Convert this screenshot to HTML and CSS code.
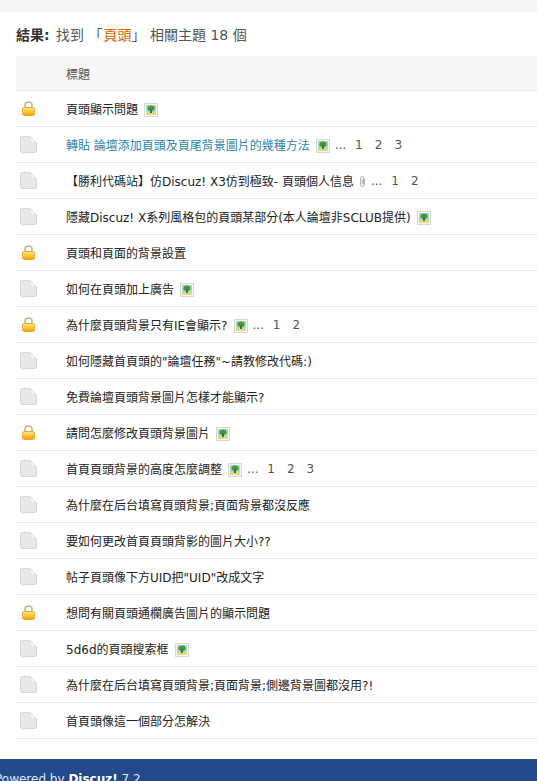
FILE: index.html
```html
<!DOCTYPE html>
<html lang="zh-Hant">
<head>
<meta charset="utf-8">
<title>搜尋結果</title>
<link rel="stylesheet" href="styles.css">
</head>
<body>
<svg class="defs" width="0" height="0" aria-hidden="true">
  <defs>
    <linearGradient id="lockbody" x1="0" y1="0" x2="0" y2="1"><stop offset="0" stop-color="#fde9a0"/><stop offset=".45" stop-color="#fbc83c"/><stop offset="1" stop-color="#f39c12"/></linearGradient>
  </defs>
  <symbol id="doc" viewBox="0 0 17 17"><path d="M1.500 .5H10L16.500 6.500V15a1.500 1.500 0 0 1-1.500 1.500H2A1.500 1.500 0 0 1 .5 15V2A1.500 1.500 0 0 1 1.500 .5Z" fill="#e8e8e8" stroke="#d8d8d8"/><path d="M10 .5V6.500H16.500Z" fill="#f6f6f6" stroke="#dedede"/></symbol>
  <symbol id="lock" viewBox="0 0 13 15"><path d="M3 7V4.200C3 2.300 4.500 1 6.500 1S10 2.300 10 4.200V7" fill="none" stroke="#c2b690" stroke-width="1.600"/><rect x=".5" y="6.500" width="12" height="8" rx="2" fill="url(#lockbody)" stroke="#eba820"/></symbol>
  <symbol id="pic" viewBox="0 0 14 14"><rect x=".5" y=".5" width="13" height="13" fill="#f7f7f0" stroke="#d6dacb"/><rect x="2" y="2" width="10" height="10" fill="#a6d3ec"/><rect x="2" y="9" width="10" height="3" fill="#dcdc80"/><ellipse cx="7" cy="5.200" rx="3.600" ry="2.600" fill="#4a9a2a"/><rect x="6" y="6" width="2" height="4" fill="#3a7a20"/></symbol>
  <symbol id="clip" viewBox="0 0 9 13"><path d="M6.500 3.500V9.500A2 2 0 0 1 2.500 9.500V3A1.500 1.500 0 0 1 5.500 3V9A.7.7 0 0 1 4.200 9V4" fill="none" stroke="#b4b4b4"/></symbol>
</svg>
<div class="topbar"></div>
<h1 class="result"><strong>結果:</strong> 找到 「<em>頁頭</em>」 相關主題 18 個</h1>
<div class="list">
  <div class="row head"><span class="cell-icon"></span><span>標題</span></div>
  <div class="row"><span class="cell-icon"><svg class="i-lock"><use href="#lock"/></svg></span><a>頁頭顯示問題</a><svg class="i-pic"><use href="#pic"/></svg></div>
  <div class="row"><span class="cell-icon"><svg class="i-doc"><use href="#doc"/></svg></span><a class="blue">轉貼 論壇添加頁頭及頁尾背景圖片的幾種方法</a><svg class="i-pic"><use href="#pic"/></svg><span class="pages">... <b>1</b><b>2</b><b>3</b></span></div>
  <div class="row"><span class="cell-icon"><svg class="i-doc"><use href="#doc"/></svg></span><a>【勝利代碼站】仿Discuz! X3仿到極致- 頁頭個人信息</a><svg class="i-clip"><use href="#clip"/></svg><span class="pages near">... <b>1</b><b>2</b></span></div>
  <div class="row"><span class="cell-icon"><svg class="i-doc"><use href="#doc"/></svg></span><a>隱藏Discuz! X系列風格包的頁頭某部分(本人論壇非SCLUB提供)</a><svg class="i-pic"><use href="#pic"/></svg></div>
  <div class="row"><span class="cell-icon"><svg class="i-lock"><use href="#lock"/></svg></span><a>頁頭和頁面的背景設置</a></div>
  <div class="row"><span class="cell-icon"><svg class="i-doc"><use href="#doc"/></svg></span><a>如何在頁頭加上廣告</a><svg class="i-pic"><use href="#pic"/></svg></div>
  <div class="row"><span class="cell-icon"><svg class="i-lock"><use href="#lock"/></svg></span><a>為什麼頁頭背景只有IE會顯示?</a><svg class="i-pic"><use href="#pic"/></svg><span class="pages">... <b>1</b><b>2</b></span></div>
  <div class="row"><span class="cell-icon"><svg class="i-doc"><use href="#doc"/></svg></span><a>如何隱藏首頁頭的"論壇任務"~請教修改代碼:)</a></div>
  <div class="row"><span class="cell-icon"><svg class="i-doc"><use href="#doc"/></svg></span><a>免費論壇頁頭背景圖片怎樣才能顯示?</a></div>
  <div class="row"><span class="cell-icon"><svg class="i-lock"><use href="#lock"/></svg></span><a>請問怎麼修改頁頭背景圖片</a><svg class="i-pic"><use href="#pic"/></svg></div>
  <div class="row"><span class="cell-icon"><svg class="i-doc"><use href="#doc"/></svg></span><a>首頁頁頭背景的高度怎麼調整</a><svg class="i-pic"><use href="#pic"/></svg><span class="pages">... <b>1</b><b>2</b><b>3</b></span></div>
  <div class="row"><span class="cell-icon"><svg class="i-doc"><use href="#doc"/></svg></span><a>為什麼在后台填寫頁頭背景;頁面背景都沒反應</a></div>
  <div class="row"><span class="cell-icon"><svg class="i-doc"><use href="#doc"/></svg></span><a>要如何更改首頁頁頭背影的圖片大小??</a></div>
  <div class="row"><span class="cell-icon"><svg class="i-doc"><use href="#doc"/></svg></span><a>帖子頁頭像下方UID把"UID"改成文字</a></div>
  <div class="row"><span class="cell-icon"><svg class="i-lock"><use href="#lock"/></svg></span><a>想問有關頁頭通欄廣告圖片的顯示問題</a></div>
  <div class="row"><span class="cell-icon"><svg class="i-doc"><use href="#doc"/></svg></span><a>5d6d的頁頭搜索框</a><svg class="i-pic"><use href="#pic"/></svg></div>
  <div class="row"><span class="cell-icon"><svg class="i-doc"><use href="#doc"/></svg></span><a>為什麼在后台填寫頁頭背景;頁面背景;側邊背景圖都沒用?!</a></div>
  <div class="row"><span class="cell-icon"><svg class="i-doc"><use href="#doc"/></svg></span><a>首頁頭像這一個部分怎解決</a></div>
</div>
<footer class="foot"><span class="foot-text">Powered by <strong>Discuz!</strong> 7.2</span></footer>
</body>
</html>
```

FILE: styles.css
```css
html, body {
  margin: 0;
  height: 781px;
  overflow: hidden;
  background: #fff;
}
body {
  font-family: "DejaVu Sans", "Noto Sans CJK TC", sans-serif;
  font-size: 12px;
  color: #444;
}
.defs { position: absolute; }
.topbar {
  height: 12px;
  background: #f6f6f6;
}
.result {
  margin: 0;
  height: 44px;
  padding-left: 16px;
  font-size: 14px;
  font-weight: normal;
  line-height: 46px;
  color: #555;
  white-space: nowrap;
}
.result strong { color: #333; margin-right: 2px; }
.result em { font-style: normal; color: #e06000; margin-left: 1px; }
.list {
  margin-left: 16px;
}
.row {
  display: flex;
  align-items: center;
  height: 35px;
  border-bottom: 1px solid #e8e8e8;
  white-space: nowrap;
  color: #222;
}
.row a { color: #222; }
.row a.blue { color: #2b86ad; }
.row.head {
  height: 34px;
  background: #f6f6f6;
  color: #555;
}
.cell-icon {
  flex: none;
  display: flex;
  align-items: center;
  width: 50px;
  height: 100%;
}
.i-lock {
  width: 13px;
  height: 15px;
  margin-left: 6px;
}
.i-doc {
  width: 17px;
  height: 17px;
  margin-left: 4px;
}
.i-pic {
  flex: none;
  width: 14px;
  height: 14px;
  margin-left: 6px;
  margin-top: 2px;
}
.i-clip {
  flex: none;
  width: 9px;
  height: 13px;
  margin-left: 4px;
  margin-top: 2px;
}
.pages {
  margin-left: 5px;
  color: #555;
}
.pages.near { margin-left: 4px; }
.pages b {
  font-weight: normal;
  margin-left: 12px;
}
.pages b:first-child { margin-left: 5px; }
.foot {
  margin-top: 20px;
  height: 40px;
  padding-top: 13px;
  background: #224a8c;
  color: #dfe6f2;
  line-height: 14px;
  box-sizing: border-box;
  white-space: nowrap;
}
.foot-text { display: block; margin-left: -5px; }
.foot strong { color: #fff; }
```
